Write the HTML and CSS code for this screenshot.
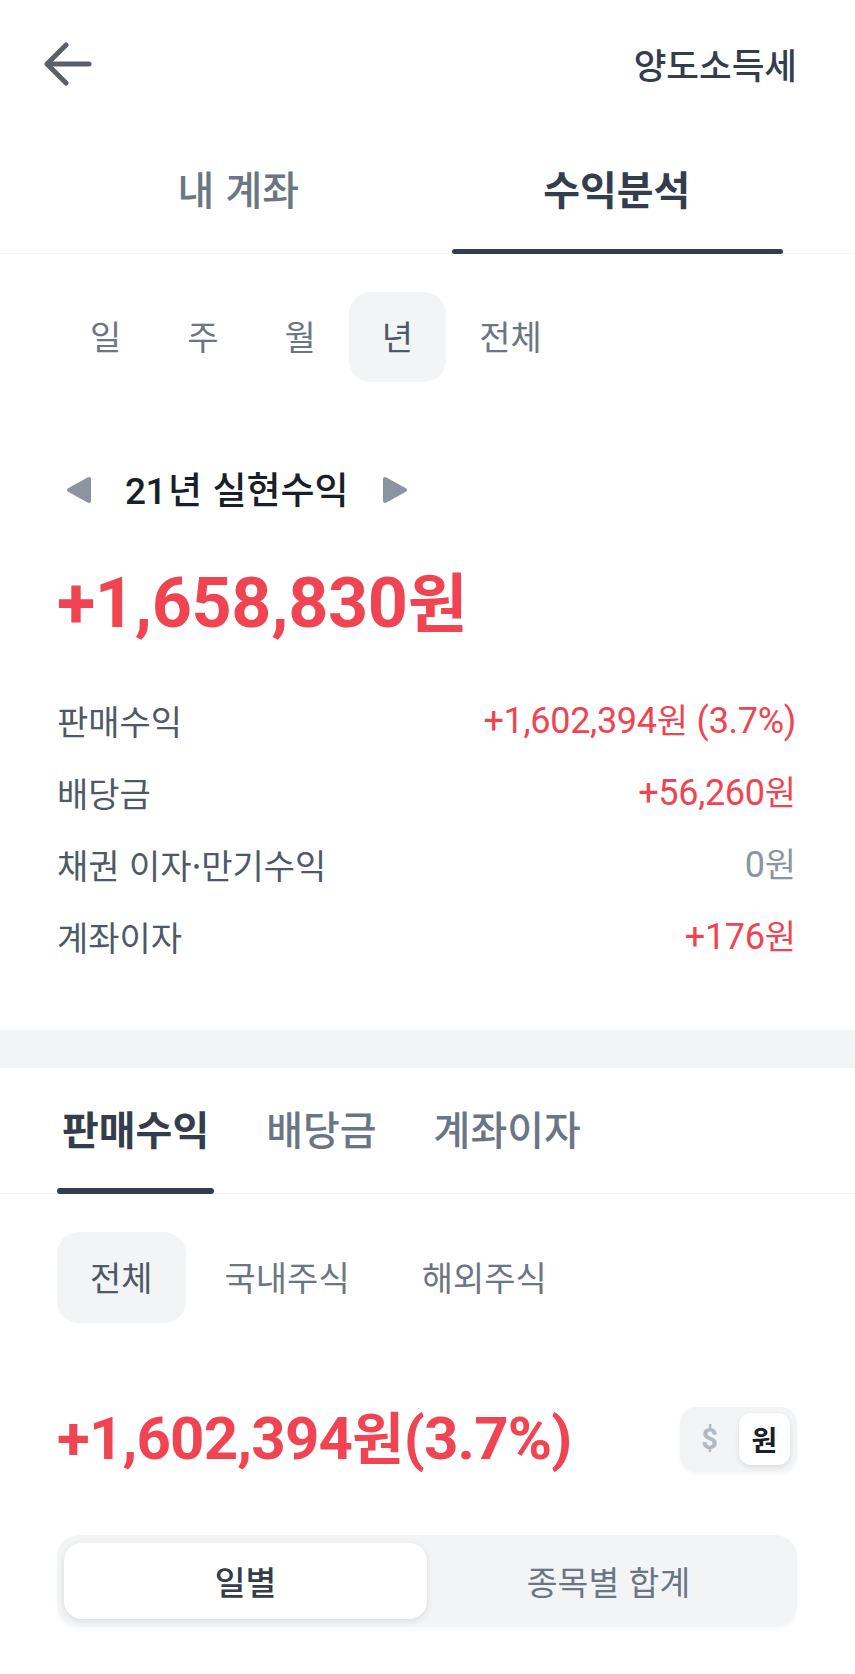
FILE: index.html
```html
<!DOCTYPE html>
<html lang="ko">
<head>
<meta charset="utf-8">
<title>수익분석</title>
<link rel="stylesheet" href="styles.css">
</head>
<body>
<div class="page">
  <header class="header">
    <svg class="back" width="48" height="44" viewBox="0 0 48 44" aria-label="뒤로">
      <polyline points="22,3 3,22 22,41" fill="none" stroke="#5a6069" stroke-width="5" stroke-linecap="round" stroke-linejoin="round"/>
      <line x1="4" y1="22" x2="45" y2="22" stroke="#5a6069" stroke-width="5" stroke-linecap="round"/>
    </svg>
    <div class="header-title">양도소득세</div>
  </header>

  <nav class="main-tabs">
    <div class="main-tab">내 계좌</div>
    <div class="main-tab active">수익분석</div>
  </nav>

  <div class="period">
    <div class="period-item">일</div>
    <div class="period-item">주</div>
    <div class="period-item">월</div>
    <div class="period-item active">년</div>
    <div class="period-item">전체</div>
  </div>

  <div class="title-row">
    <svg class="tri tri-left" width="26" height="28" viewBox="0 0 26 28"><path d="M23 3 L3 14 L23 25 Z" fill="#8b95a1" stroke="#8b95a1" stroke-width="4" stroke-linejoin="round"/></svg>
    <div class="title"><span class="title-num">21</span>년 실현수익</div>
    <svg class="tri tri-right" width="26" height="28" viewBox="0 0 26 28"><path d="M3 3 L23 14 L3 25 Z" fill="#8b95a1" stroke="#8b95a1" stroke-width="4" stroke-linejoin="round"/></svg>
  </div>

  <div class="big-amount">+1,658,830<span class="won">원</span></div>

  <div class="rows">
    <div class="row"><span class="label">판매수익</span><span class="value red">+1,602,394<span class="kr">원</span> (3.7%)</span></div>
    <div class="row"><span class="label">배당금</span><span class="value red">+56,260<span class="kr">원</span></span></div>
    <div class="row"><span class="label">채권 이자·만기수익</span><span class="value gray">0<span class="kr">원</span></span></div>
    <div class="row"><span class="label">계좌이자</span><span class="value red">+176<span class="kr">원</span></span></div>
  </div>

  <div class="band"></div>

  <nav class="sub-tabs">
    <div class="sub-tab active">판매수익</div>
    <div class="sub-tab">배당금</div>
    <div class="sub-tab">계좌이자</div>
  </nav>

  <div class="market">
    <div class="market-item active">전체</div>
    <div class="market-item">국내주식</div>
    <div class="market-item">해외주식</div>
  </div>

  <div class="amount-row">
    <div class="amount">+1,602,394<span class="won2">원</span>(3.7%)</div>
    <div class="currency">
      <div class="cur-dollar">$</div>
      <div class="cur-won">원</div>
    </div>
  </div>

  <div class="segment">
    <div class="seg-item active">일별</div>
    <div class="seg-item">종목별 합계</div>
  </div>
</div>
</body>
</html>
```

FILE: styles.css
```css
html, body {
  margin: 0;
  padding: 0;
  background: #ffffff;
}
body {
  font-family: "Noto Sans CJK KR", "Noto Sans", sans-serif;
  color: #191f28;
}
.page {
  width: 855px;
  height: 1674px;
  overflow: hidden;
}

/* header */
.header {
  height: 128px;
  display: flex;
  align-items: center;
  justify-content: space-between;
  padding: 0 58px 0 44px;
  box-sizing: border-box;
}
.back {
  display: block;
}
.header-title {
  font-size: 35.5px;
  line-height: 44px;
  font-weight: 500;
  color: #333d4b;
}

/* main tabs */
.main-tabs {
  display: flex;
  padding: 0 49px;
  border-bottom: 1px solid #f2f4f6;
}
.main-tab {
  flex: 1;
  height: 125px;
  box-sizing: border-box;
  padding-top: 35px;
  text-align: center;
  font-size: 40px;
  line-height: 50px;
  font-weight: 500;
  color: #6b7684;
  position: relative;
}
.main-tab.active {
  font-weight: 700;
  color: #333d4b;
}
.main-tab.active::after {
  content: "";
  position: absolute;
  left: 24px;
  right: 23px;
  bottom: -1px;
  height: 5px;
  border-radius: 3px;
  background: #333d4b;
}

/* period */
.period {
  display: flex;
  margin-top: 38px;
  padding-left: 57px;
}
.period-item {
  height: 90px;
  line-height: 88px;
  padding: 0 33px;
  font-size: 34px;
  color: #6b7684;
  border-radius: 22px;
}
.period-item.active {
  background: #f2f4f6;
  color: #4e5968;
}

/* title */
.title-row {
  display: flex;
  align-items: center;
  height: 40px;
  margin-top: 88px;
  padding-left: 57px;
}
.tri {
  display: block;
}
.tri-left {
  margin-left: 9px;
}
.title {
  margin-left: 33px;
  margin-right: 33px;
  font-size: 37px;
  line-height: 40px;
  font-weight: 500;
  color: #191f28;
}
.title-num {
  font-family: Roboto, sans-serif;
  font-size: 37px;
  letter-spacing: -0.5px;
  margin-right: 2px;
}

/* big amount */
.big-amount {
  margin-top: 51px;
  padding-left: 57px;
  font-family: Roboto, sans-serif;
  font-size: 70px;
  line-height: 84px;
  font-weight: 700;
  color: #f04452;
  letter-spacing: -0.3px;
}
.won {
  font-family: "Noto Sans CJK KR", sans-serif;
  font-size: 65px;
  line-height: 1;
  letter-spacing: 0;
}

/* detail rows */
.rows {
  margin-top: 40px;
  padding: 0 59px 0 57px;
}
.row {
  height: 72px;
  display: flex;
  align-items: center;
  justify-content: space-between;
}
.label {
  font-size: 34px;
  line-height: 40px;
  color: #4e5968;
}
.value {
  font-family: Roboto, sans-serif;
  font-size: 36px;
  line-height: 40px;
  letter-spacing: -0.3px;
}
.value .kr {
  font-family: "Noto Sans CJK KR", sans-serif;
  font-size: 34px;
  line-height: 1;
  letter-spacing: 0;
}
.red {
  color: #f04452;
}
.gray {
  color: #8b95a1;
}

/* gray band */
.band {
  margin-top: 57px;
  height: 38px;
  background: #f2f4f6;
}

/* sub tabs */
.sub-tabs {
  display: flex;
  gap: 47px;
  padding-left: 57px;
  border-bottom: 1px solid #f2f4f6;
}
.sub-tab {
  height: 125px;
  box-sizing: border-box;
  padding: 35px 5px 0;
  font-size: 40px;
  line-height: 50px;
  font-weight: 500;
  color: #6b7684;
  position: relative;
}
.sub-tab.active {
  font-weight: 700;
  color: #333d4b;
}
.sub-tab.active::after {
  content: "";
  position: absolute;
  left: 0;
  right: 0;
  bottom: -1px;
  height: 6px;
  border-radius: 3px;
  background: #333d4b;
}

/* market filter */
.market {
  display: flex;
  gap: 6px;
  margin-top: 38px;
  padding-left: 57px;
}
.market-item {
  height: 91px;
  line-height: 89px;
  padding: 0 33px;
  font-size: 34px;
  color: #6b7684;
  border-radius: 22px;
}
.market-item.active {
  background: #f2f4f6;
  color: #4e5968;
}

/* amount row */
.amount-row {
  display: flex;
  align-items: center;
  justify-content: space-between;
  height: 66px;
  margin-top: 83px;
  padding: 0 58px 0 57px;
}
.amount {
  font-family: Roboto, sans-serif;
  font-size: 60px;
  line-height: 72px;
  font-weight: 700;
  color: #f04452;
  letter-spacing: -0.8px;
}
.won2 {
  font-family: "Noto Sans CJK KR", sans-serif;
  font-size: 56px;
  line-height: 1;
  letter-spacing: 0;
}
.currency {
  display: flex;
  align-items: center;
  height: 65px;
  padding: 0 7px 0 0;
  box-sizing: border-box;
  background: #f2f4f6;
  border-radius: 16px;
  box-shadow: 0 2px 4px rgba(0, 0, 0, 0.04);
}
.cur-dollar {
  width: 59px;
  text-align: center;
  font-family: Roboto, sans-serif;
  font-size: 29px;
  font-weight: 700;
  color: #b0b8c1;
}
.cur-won {
  width: 51px;
  height: 52px;
  line-height: 52px;
  text-align: center;
  font-size: 28px;
  font-weight: 700;
  color: #191f28;
  background: #ffffff;
  border-radius: 12px;
  box-shadow: 0 2px 5px rgba(0, 0, 0, 0.1);
}

/* segmented control */
.segment {
  display: flex;
  margin: 63px 58px 0 57px;
  height: 92px;
  box-sizing: border-box;
  padding: 8px 7px;
  background: #f2f4f6;
  border-radius: 22px;
  box-shadow: 0 3px 5px rgba(0, 0, 0, 0.03);
}
.seg-item {
  flex: 1;
  text-align: center;
  line-height: 76px;
  font-size: 33.5px;
  color: #6b7684;
  border-radius: 18px;
}
.seg-item.active {
  background: #ffffff;
  color: #333d4b;
  font-weight: 500;
  box-shadow: 0 2px 6px rgba(0, 0, 0, 0.1);
}
```
